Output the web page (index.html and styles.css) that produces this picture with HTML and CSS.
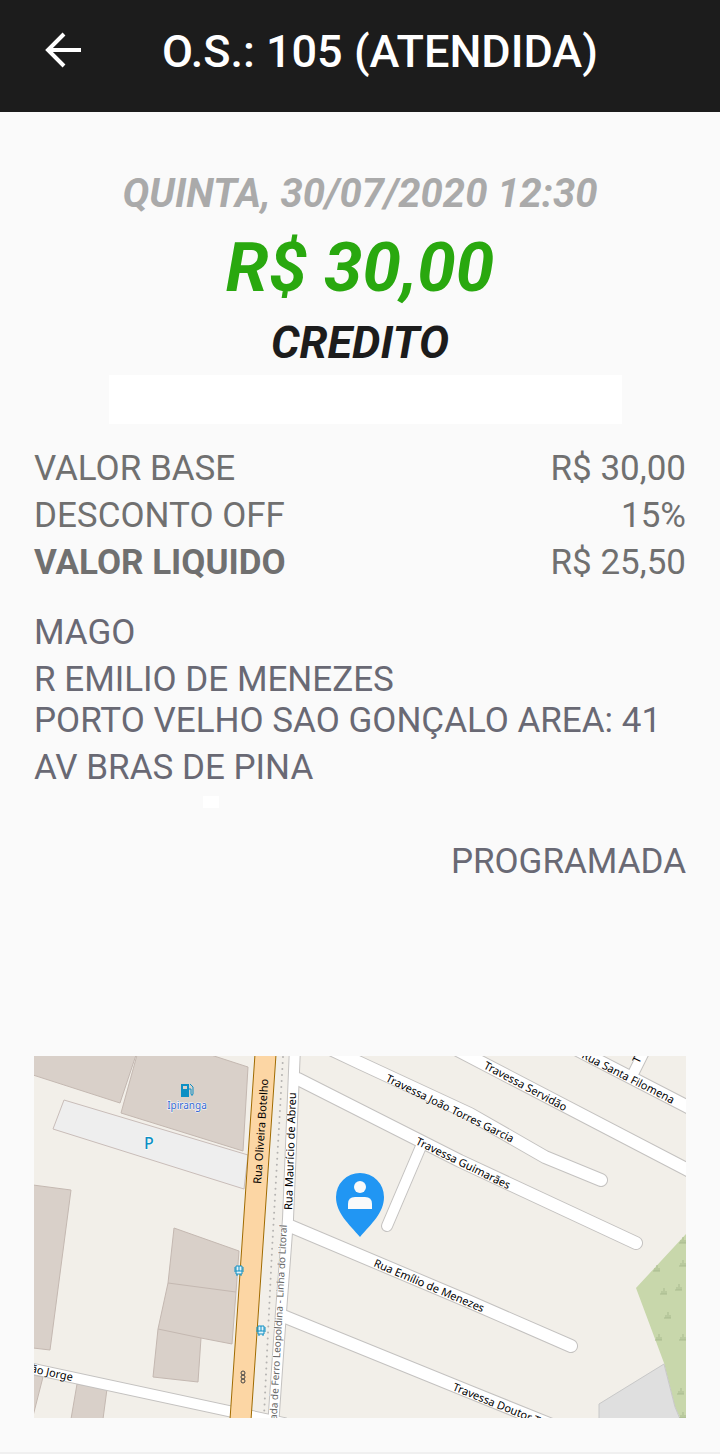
FILE: index.html
```html
<!DOCTYPE html>
<html lang="pt-BR">
<head>
<meta charset="utf-8">
<meta name="viewport" content="width=device-width, initial-scale=1">
<title>O.S.: 105 (ATENDIDA)</title>
<link rel="stylesheet" href="styles.css">
</head>
<body>
<header class="app-bar">
  <button class="back" type="button" aria-label="Voltar">
    <svg class="back-icon" viewBox="0 0 38 38" aria-hidden="true"><path d="M37 19H4M20 3L4 19l16 16"/></svg>
  </button>
  <h1 class="title">O.S.: 105 (ATENDIDA)</h1>
</header>
<main class="content">
  <section class="summary">
    <p class="date">QUINTA, 30/07/2020 12:30</p>
    <p class="amount">R$ 30,00</p>
    <p class="payment">CREDITO</p>
    <div class="blank-field"></div>
  </section>
  <table class="values">
    <tbody>
      <tr><th scope="row">VALOR BASE</th><td>R$ 30,00</td></tr>
      <tr><th scope="row">DESCONTO OFF</th><td>15%</td></tr>
      <tr class="net"><th scope="row">VALOR LIQUIDO</th><td>R$ 25,50</td></tr>
    </tbody>
  </table>
  <section class="address">
    <p>MAGO</p>
    <p>R EMILIO DE MENEZES<br>PORTO VELHO SAO GONÇALO AREA: 41</p>
    <p>AV BRAS DE PINA</p>
    <div class="blank-mark"></div>
  </section>
  <p class="status">PROGRAMADA</p>
  <svg class="map" viewBox="0 0 652 362" role="img" aria-label="Mapa do endereço">
    <rect class="land" width="652" height="362"/>
    <g class="building">
      <path d="M-1 19L86 47L102-1H-1z"/>
      <path d="M103-1L87 57L209 95L214 11L177-1z"/>
      <path d="M-1 129L37 134L16 294L-1 292z"/>
      <path d="M140 172L205 195L202 236L198 288L167 282L164 326L119 321L124 273L134 227z"/>
      <path d="M134 227L202 236M124 273L167 282"/>
      <path d="M-1 319L9 321L-1 360z"/>
      <path d="M43 328L73 333L69 363H37z"/>
    </g>
    <path class="parking" d="M30 44L19 73L210 133L214 99z"/>
    <path class="scrub" d="M652 178L602 232L630 307L641 351L646 362H652z"/>
    <path class="plot" d="M630 308L565 348V363H646L641 351z"/>
    <g class="tufts">
      <path id="tuft" d="M645 187h7M649 187v-6M647 187v-3M651 187v-3"/>
      <use href="#tuft" y="23"/><use href="#tuft" x="-26" y="28"/><use href="#tuft" x="-4" y="47"/><use href="#tuft" x="-19" y="51"/>
      <use href="#tuft" x="-15" y="75"/><use href="#tuft" x="-24" y="97"/><use href="#tuft" y="97"/><use href="#tuft" x="-2" y="151"/><use href="#tuft" y="175"/>
    </g>
    <defs>
      <g id="wide">
        <path d="M290-10L326 7L436 58L511 101L567 124"/>
        <path d="M264 23L426 105L602 187"/>
        <path d="M256 170L436 246L537 290"/>
        <path d="M249 260L436 336L540 378"/>
        <path d="M410-13L652 113L665 120"/>
        <path d="M530-13L652 50L665 57"/>
      </g>
      <g id="narrow">
        <path d="M261-9L254 163L247 256L239 371"/>
        <path d="M388 88L353 170"/>
        <path d="M599 18L611-6"/>
        <path d="M-10 311L250 367"/>
      </g>
    </defs>
    <g class="edge"><use class="w13" href="#wide"/><use class="w11" href="#narrow"/></g>
    <g class="street"><use class="w12" href="#wide"/><use class="w10" href="#narrow"/></g>
    <path class="rail" d="M249 1L238 194L230 360"/>
    <path class="main-edge" d="M232-9L206 371"/>
    <path class="main-road" d="M232-9L206 371"/>
    <g class="label">
      <text class="on-main" transform="translate(227 128) rotate(-86)">Rua Oliveira Botelho</text>
      <text transform="translate(258 154) rotate(-88)">Rua Maurício de Abreu</text>
      <text transform="translate(351 25) rotate(26)">Travessa João Torres Garcia</text>
      <text transform="translate(381 88) rotate(26)">Travessa Guimarães</text>
      <text transform="translate(449 12) rotate(28)">Travessa Servidão</text>
      <text class="end" transform="translate(638 48) rotate(27)">Rua Santa Filomena</text>
      <text transform="translate(339 210) rotate(23)">Rua Emílio de Menezes</text>
      <text transform="translate(418 334) rotate(22)">Travessa Doutor T</text>
      <text class="end" transform="translate(38 325) rotate(12)">São Jorge</text>
      <text transform="translate(605 8) rotate(-64)">T</text>
      <text class="end railway" transform="translate(253 169) rotate(-87)">Estrada de Ferro Leopoldina - Linha do Litoral</text>
      <text class="poi" x="153" y="53">Ipiranga</text>
      <text class="poi letter" x="115" y="93">P</text>
    </g>
    <g class="poi-icon">
      <path fill-rule="evenodd" d="M147 28h8v13h-8zM149 30v3h4v-3z"/>
      <path class="hose" d="M156 28l3 3v7q-1 3-2 0v-5h-2"/>
      <path id="bus" class="bus" d="M202 210h6v8h-6zM202 215h6M201 211v5M209 211v5M203 218v2M207 218v2M205 210v5"/>
      <use href="#bus" x="22" y="60"/>
    </g>
    <g class="signal"><circle cx="209" cy="317" r="2"/><circle cx="209" cy="321" r="2"/><circle cx="209" cy="325" r="2"/></g>
    <path class="pin" d="M326 117a24 24 0 0 0-24 24c0 16 13 27 24 40c11-13 24-24 24-40a24 24 0 0 0-24-24z"/>
    <g class="person"><circle cx="326" cy="131" r="6"/><path d="M314 153v-5q0-7 7-7h10q7 0 7 7v5z"/></g>
  </svg>
</main>
</body>
</html>
```
FILE: styles.css
```css
* { box-sizing: border-box; }
body {
  margin: 0;
  background: #fafafa;
  color: #707070;
  font-family: Roboto, "Liberation Sans", sans-serif;
  font-size: 35px;
  line-height: 41px;
}
p, h1 { margin: 0; }
.app-bar {
  display: flex;
  align-items: center;
  gap: 40px;
  padding: 24px 44px 32px;
  background: #1c1c1c;
  color: #fff;
}
.back {
  flex: none;
  margin-top: -4px;
  padding: 0;
  border: 0;
  background: none;
  color: inherit;
}
.back-icon {
  display: block;
  width: 38px;
  height: 38px;
  fill: none;
  stroke: currentColor;
  stroke-width: 4;
}
.title {
  flex: 1;
  padding-right: 38px;
  font-size: 45px;
  font-weight: 500;
  line-height: 56px;
  text-align: center;
}
.content {
  padding: 58px 34px 34px;
  border-bottom: 2px solid #f0f0f0;
}
.summary {
  font-weight: 700;
  font-style: italic;
  text-align: center;
}
.date {
  color: #aaa;
  font-size: 40px;
  line-height: 48px;
}
.amount {
  margin: 10px 0 9px;
  color: #29a80f;
  font-size: 69px;
  line-height: 80px;
}
.payment {
  color: #1c1c1c;
  font-size: 45px;
  line-height: 52px;
}
.blank-field {
  height: 49px;
  margin: 6px 64px 24px 75px;
  background: #fff;
}
.values {
  width: 100%;
  border-collapse: collapse;
}
.values th, .values td {
  padding: 0 0 6px;
  font-weight: 400;
  text-align: left;
}
.values td { text-align: right; }
.values .net th { font-weight: 700; }
.address {
  display: flex;
  flex-direction: column;
  gap: 6px;
  margin-top: 23px;
}
.address, .status { color: #696974; }
.blank-mark {
  width: 16px;
  height: 12px;
  margin: 2px 0 0 169px;
  background: #fff;
}
.status {
  margin: 33px 0 174px;
  text-align: right;
}
.map {
  display: block;
  width: 100%;
  height: auto;
}
.land { fill: #f2efe9; }
.building { fill: #d9d0c9; stroke: #c4b8b1; }
.parking { fill: #eee; stroke: #c9bdb9; }
.scrub { fill: #c8d7ab; }
.plot { fill: #dfdfdf; stroke: #c8c8c8; }
.tufts { fill: none; stroke: #a9bb8f; }
.edge, .street, .main-edge, .main-road, .rail {
  fill: none;
  stroke-linecap: round;
  stroke-linejoin: round;
}
.edge { stroke: #c4c2c0; }
.street { stroke: #fff; }
.w13 { stroke-width: 14px; }
.w12 { stroke-width: 12px; }
.w11 { stroke-width: 12px; }
.w10 { stroke-width: 10px; }
.main-edge { stroke: #a06b00; stroke-width: 22px; }
.main-road { stroke: #fcd6a4; stroke-width: 20px; }
.rail { stroke: #b5b3b1; stroke-width: 2px; stroke-dasharray: 0 6; }
.label {
  fill: #000;
  stroke: #fff;
  stroke-width: 1px;
  paint-order: stroke;
  font-family: "Noto Sans", sans-serif;
  font-size: 11px;
}
.label .on-main { stroke: none; }
.label .end { text-anchor: end; }
.label .railway { fill: #666; font-size: 10px; }
.label .poi { fill: #2f64d0; text-anchor: middle; font-size: 10px; }
.label .letter { fill: #0d8fc4; font-size: 16px; font-weight: 500; }
.poi-icon { fill: #0d8fc4; }
.hose { fill: none; stroke: #0d8fc4; }
.bus { fill: #e6f3f8; stroke: #0d8fc4; }
.signal { fill: none; stroke: #444; }
.pin { fill: #2196f3; }
.person { fill: #fafafa; }
```
